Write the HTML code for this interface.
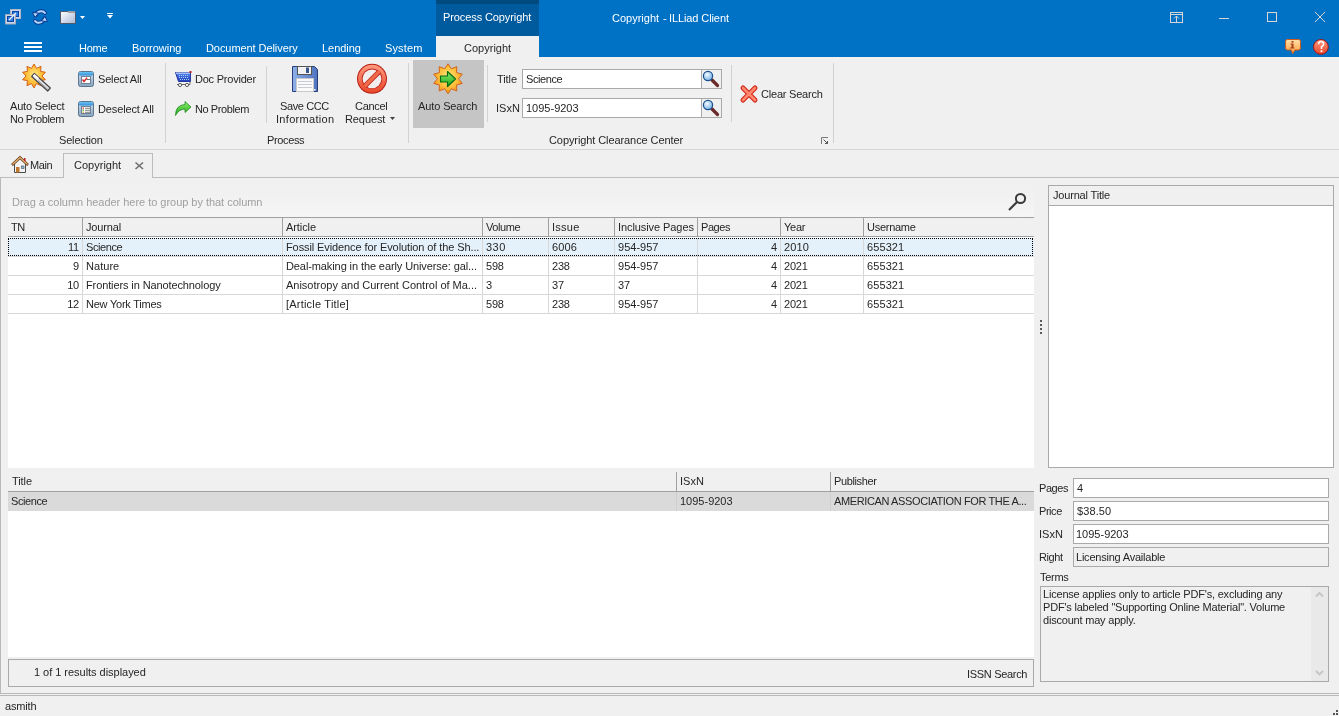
<!DOCTYPE html>
<html><head><meta charset="utf-8">
<style>
*{margin:0;padding:0;box-sizing:border-box;}
html,body{width:1339px;height:716px;overflow:hidden;background:#f0f0f0;}
body{position:relative;will-change:transform;font-family:"Liberation Sans",sans-serif;font-size:11px;color:#262626;letter-spacing:-0.2px;}
.a{position:absolute;}
.t{position:absolute;white-space:nowrap;line-height:13px;}
.w{color:#fff;}
.vs{position:absolute;width:1px;background:#d2d2d2;}
.box{position:absolute;border:1px solid #a9a9a9;background:#fff;}
.gh{position:absolute;top:217px;height:20px;background:#f0f0f0;border-top:1px solid #a0a0a0;border-bottom:1px solid #a0a0a0;}
.hc{position:absolute;top:0;height:19px;line-height:19px;padding-left:3px;white-space:nowrap;overflow:hidden;}
.hd{position:absolute;top:0;width:1px;height:19px;background:#a0a0a0;}
.row{position:absolute;left:8px;width:1025px;height:19px;border-bottom:1px solid #d8d8d8;background:#fff;}
.c{position:absolute;top:0;height:18px;line-height:18px;white-space:nowrap;overflow:hidden;padding-left:3px;}
.r{text-align:right;padding-left:0;padding-right:4px;}
.cd{position:absolute;top:0;width:1px;height:18px;background:#d8d8d8;}
</style></head><body>

<!-- ===== Title bar ===== -->
<div class="a" style="left:0;top:0;width:1339px;height:57px;background:#0072c6;"></div>
<!-- contextual tab -->
<div class="a" style="left:436px;top:0;width:103px;height:36px;background:#005a9e;"></div>
<div class="a" style="left:436px;top:0;width:103px;height:4px;background:#004a80;"></div>
<div class="a" style="left:436px;top:36px;width:103px;height:21px;background:#f0f0f0;"></div>
<div class="t w" style="left:443px;top:11px;letter-spacing:-0.10px;">Process Copyright</div>
<div class="t w" style="left:612px;top:12px;letter-spacing:0px;">Copyright</div>
<div class="t w" style="left:663px;top:12px;">-</div>
<div class="t w" style="left:669px;top:12px;letter-spacing:-0.1px;">ILLiad Client</div>
<div class="t" style="left:464px;top:42px;letter-spacing:0.01px;">Copyright</div>

<!-- ribbon tabs -->
<div class="a" style="left:24px;top:42px;width:18px;height:2px;background:#fff;"></div>
<div class="a" style="left:24px;top:46px;width:18px;height:2px;background:#fff;"></div>
<div class="a" style="left:24px;top:50px;width:18px;height:2px;background:#fff;"></div>
<div class="t w" style="left:79px;top:42px;letter-spacing:-0.23px;">Home</div>
<div class="t w" style="left:132px;top:42px;letter-spacing:-0.02px;">Borrowing</div>
<div class="t w" style="left:206px;top:42px;letter-spacing:-0.07px;">Document Delivery</div>
<div class="t w" style="left:322px;top:42px;letter-spacing:-0.05px;">Lending</div>
<div class="t w" style="left:385px;top:42px;letter-spacing:0.14px;">System</div>

<!-- ===== Ribbon body ===== -->
<div class="a" style="left:0;top:149px;width:1339px;height:1px;background:#d5d5d5;"></div>
<div class="vs" style="left:165px;top:63px;height:80px;"></div>
<div class="vs" style="left:266px;top:66px;height:57px;"></div>
<div class="vs" style="left:408px;top:63px;height:80px;"></div>
<div class="vs" style="left:487px;top:65px;height:57px;"></div>
<div class="vs" style="left:731px;top:65px;height:57px;"></div>
<div class="vs" style="left:833px;top:63px;height:80px;"></div>

<div class="t" style="left:10px;top:100px;letter-spacing:-0.17px;">Auto Select</div>
<div class="t" style="left:10px;top:113px;letter-spacing:-0.42px;">No Problem</div>
<div class="t" style="left:98px;top:73px;letter-spacing:-0.17px;">Select All</div>
<div class="t" style="left:98px;top:103px;letter-spacing:-0.13px;">Deselect All</div>
<div class="t" style="left:59px;top:134px;letter-spacing:-0.17px;">Selection</div>

<div class="t" style="left:195px;top:73px;letter-spacing:-0.22px;">Doc Provider</div>
<div class="t" style="left:195px;top:103px;letter-spacing:-0.42px;">No Problem</div>
<div class="t" style="left:280px;top:100px;letter-spacing:-0.39px;">Save CCC</div>
<div class="t" style="left:276px;top:113px;letter-spacing:0.31px;">Information</div>
<div class="t" style="left:355px;top:100px;letter-spacing:-0.30px;">Cancel</div>
<div class="t" style="left:345px;top:113px;letter-spacing:-0.10px;">Request</div>
<div class="t" style="left:267px;top:134px;letter-spacing:-0.37px;">Process</div>

<div class="a" style="left:413px;top:60px;width:71px;height:68px;background:#c5c5c5;"></div>
<div class="t" style="left:418px;top:100px;letter-spacing:-0.11px;">Auto Search</div>
<div class="t" style="left:497px;top:73px;letter-spacing:-0.09px;">Title</div>
<div class="t" style="left:496px;top:102px;letter-spacing:0.05px;">ISxN</div>
<div class="box" style="left:522px;top:69px;width:180px;height:20px;"></div>
<div class="t" style="left:526px;top:73px;letter-spacing:-0.41px;">Science</div>
<div class="box" style="left:701px;top:69px;width:21px;height:20px;background:#f0f0f0;"></div>
<div class="box" style="left:522px;top:98px;width:180px;height:20px;"></div>
<div class="t" style="left:526px;top:102px;letter-spacing:0.00px;">1095-9203</div>
<div class="box" style="left:701px;top:98px;width:21px;height:20px;background:#f0f0f0;"></div>
<div class="t" style="left:761px;top:88px;letter-spacing:-0.21px;">Clear Search</div>
<div class="t" style="left:549px;top:134px;letter-spacing:-0.09px;">Copyright Clearance Center</div>

<!-- ===== Document tabs ===== -->
<div class="a" style="left:0;top:177px;width:1339px;height:1px;background:#bcbcbc;"></div>
<div class="a" style="left:63px;top:153px;width:90px;height:25px;border:1px solid #bcbcbc;border-bottom:none;background:#f0f0f0;"></div>
<div class="t" style="left:30px;top:159px;letter-spacing:-0.37px;">Main</div>
<div class="t" style="left:74px;top:159px;letter-spacing:0.01px;">Copyright</div>

<!-- ===== Content ===== -->
<div class="a" style="left:0;top:177px;width:1px;height:517px;background:#b9b9b9;"></div>
<div class="a" style="left:0;top:693px;width:1339px;height:1px;background:#b9b9b9;"></div>
<div class="a" style="left:0;top:695px;width:1339px;height:1px;background:#b9b9b9;"></div>

<!-- group panel -->
<div class="a" style="left:8px;top:188px;width:1026px;height:29px;background:linear-gradient(#f0f0f0,#f5f5f5);"></div>
<div class="t" style="left:12px;top:196px;color:#a0a0a0;letter-spacing:-0.03px;">Drag a column header here to group by that column</div>

<!-- top grid -->
<div class="a" style="left:8px;top:237px;width:1026px;height:231px;background:#fff;"></div>
<div class="gh" style="left:8px;width:1026px;">
  <div class="hc" style="left:0;width:74px;letter-spacing:-0.40px;">TN</div>
  <div class="hd" style="left:74px;"></div>
  <div class="hc" style="left:75px;width:199px;letter-spacing:-0.14px;">Journal</div>
  <div class="hd" style="left:274px;"></div>
  <div class="hc" style="left:275px;width:199px;letter-spacing:-0.08px;">Article</div>
  <div class="hd" style="left:474px;"></div>
  <div class="hc" style="left:475px;width:65px;letter-spacing:-0.40px;">Volume</div>
  <div class="hd" style="left:540px;"></div>
  <div class="hc" style="left:541px;width:65px;letter-spacing:0.25px;">Issue</div>
  <div class="hd" style="left:606px;"></div>
  <div class="hc" style="left:607px;width:82px;letter-spacing:-0.08px;">Inclusive Pages</div>
  <div class="hd" style="left:689px;"></div>
  <div class="hc" style="left:690px;width:82px;letter-spacing:-0.44px;">Pages</div>
  <div class="hd" style="left:772px;"></div>
  <div class="hc" style="left:773px;width:82px;letter-spacing:-0.23px;">Year</div>
  <div class="hd" style="left:855px;"></div>
  <div class="hc" style="left:856px;width:169px;letter-spacing:-0.27px;">Username</div>
</div>

<!-- rows -->
<div class="a" style="left:8px;top:238px;width:1026px;height:18px;background:#e5f1fa;"></div>
<div class="a" style="left:8px;top:256px;width:1026px;height:1px;background:#d8d8d8;"></div>
<div class="a" style="left:82px;top:238px;width:1px;height:18px;background:#d8d8d8;"></div>
<div class="a" style="left:282px;top:238px;width:1px;height:18px;background:#d8d8d8;"></div>
<div class="a" style="left:482px;top:238px;width:1px;height:18px;background:#d8d8d8;"></div>
<div class="a" style="left:548px;top:238px;width:1px;height:18px;background:#d8d8d8;"></div>
<div class="a" style="left:614px;top:238px;width:1px;height:18px;background:#d8d8d8;"></div>
<div class="a" style="left:697px;top:238px;width:1px;height:18px;background:#d8d8d8;"></div>
<div class="a" style="left:780px;top:238px;width:1px;height:18px;background:#d8d8d8;"></div>
<div class="a" style="left:863px;top:238px;width:1px;height:18px;background:#d8d8d8;"></div>
<div class="t" style="left:8px;width:71px;text-align:right;top:241px;">11</div>
<div class="t" style="left:86px;top:241px;letter-spacing:-0.41px;">Science</div>
<div class="t" style="left:286px;top:241px;letter-spacing:-0.10px;">Fossil Evidence for Evolution of the Sh...</div>
<div class="t" style="left:486px;top:241px;letter-spacing:0.50px;">330</div>
<div class="t" style="left:552px;top:241px;letter-spacing:0.17px;">6006</div>
<div class="t" style="left:618px;top:241px;letter-spacing:0.02px;">954-957</div>
<div class="t" style="left:697px;width:80px;text-align:right;top:241px;">4</div>
<div class="t" style="left:784px;top:241px;letter-spacing:0.17px;">2010</div>
<div class="t" style="left:867px;top:241px;letter-spacing:0.10px;">655321</div>
<div class="a" style="left:8px;top:257px;width:1026px;height:18px;background:#fff;"></div>
<div class="a" style="left:8px;top:275px;width:1026px;height:1px;background:#d8d8d8;"></div>
<div class="a" style="left:82px;top:257px;width:1px;height:18px;background:#d8d8d8;"></div>
<div class="a" style="left:282px;top:257px;width:1px;height:18px;background:#d8d8d8;"></div>
<div class="a" style="left:482px;top:257px;width:1px;height:18px;background:#d8d8d8;"></div>
<div class="a" style="left:548px;top:257px;width:1px;height:18px;background:#d8d8d8;"></div>
<div class="a" style="left:614px;top:257px;width:1px;height:18px;background:#d8d8d8;"></div>
<div class="a" style="left:697px;top:257px;width:1px;height:18px;background:#d8d8d8;"></div>
<div class="a" style="left:780px;top:257px;width:1px;height:18px;background:#d8d8d8;"></div>
<div class="a" style="left:863px;top:257px;width:1px;height:18px;background:#d8d8d8;"></div>
<div class="t" style="left:8px;width:71px;text-align:right;top:260px;">9</div>
<div class="t" style="left:86px;top:260px;letter-spacing:0.04px;">Nature</div>
<div class="t" style="left:286px;top:260px;letter-spacing:-0.10px;">Deal-making in the early Universe: gal...</div>
<div class="t" style="left:486px;top:260px;">598</div>
<div class="t" style="left:552px;top:260px;">238</div>
<div class="t" style="left:618px;top:260px;letter-spacing:0.02px;">954-957</div>
<div class="t" style="left:697px;width:80px;text-align:right;top:260px;">4</div>
<div class="t" style="left:784px;top:260px;">2021</div>
<div class="t" style="left:867px;top:260px;letter-spacing:0.10px;">655321</div>
<div class="a" style="left:8px;top:276px;width:1026px;height:18px;background:#fff;"></div>
<div class="a" style="left:8px;top:294px;width:1026px;height:1px;background:#d8d8d8;"></div>
<div class="a" style="left:82px;top:276px;width:1px;height:18px;background:#d8d8d8;"></div>
<div class="a" style="left:282px;top:276px;width:1px;height:18px;background:#d8d8d8;"></div>
<div class="a" style="left:482px;top:276px;width:1px;height:18px;background:#d8d8d8;"></div>
<div class="a" style="left:548px;top:276px;width:1px;height:18px;background:#d8d8d8;"></div>
<div class="a" style="left:614px;top:276px;width:1px;height:18px;background:#d8d8d8;"></div>
<div class="a" style="left:697px;top:276px;width:1px;height:18px;background:#d8d8d8;"></div>
<div class="a" style="left:780px;top:276px;width:1px;height:18px;background:#d8d8d8;"></div>
<div class="a" style="left:863px;top:276px;width:1px;height:18px;background:#d8d8d8;"></div>
<div class="t" style="left:8px;width:71px;text-align:right;top:279px;">10</div>
<div class="t" style="left:86px;top:279px;letter-spacing:-0.11px;">Frontiers in Nanotechnology</div>
<div class="t" style="left:286px;top:279px;letter-spacing:-0.01px;">Anisotropy and Current Control of Ma...</div>
<div class="t" style="left:486px;top:279px;">3</div>
<div class="t" style="left:552px;top:279px;">37</div>
<div class="t" style="left:618px;top:279px;">37</div>
<div class="t" style="left:697px;width:80px;text-align:right;top:279px;">4</div>
<div class="t" style="left:784px;top:279px;">2021</div>
<div class="t" style="left:867px;top:279px;letter-spacing:0.10px;">655321</div>
<div class="a" style="left:8px;top:295px;width:1026px;height:18px;background:#fff;"></div>
<div class="a" style="left:8px;top:313px;width:1026px;height:1px;background:#d8d8d8;"></div>
<div class="a" style="left:82px;top:295px;width:1px;height:18px;background:#d8d8d8;"></div>
<div class="a" style="left:282px;top:295px;width:1px;height:18px;background:#d8d8d8;"></div>
<div class="a" style="left:482px;top:295px;width:1px;height:18px;background:#d8d8d8;"></div>
<div class="a" style="left:548px;top:295px;width:1px;height:18px;background:#d8d8d8;"></div>
<div class="a" style="left:614px;top:295px;width:1px;height:18px;background:#d8d8d8;"></div>
<div class="a" style="left:697px;top:295px;width:1px;height:18px;background:#d8d8d8;"></div>
<div class="a" style="left:780px;top:295px;width:1px;height:18px;background:#d8d8d8;"></div>
<div class="a" style="left:863px;top:295px;width:1px;height:18px;background:#d8d8d8;"></div>
<div class="t" style="left:8px;width:71px;text-align:right;top:298px;">12</div>
<div class="t" style="left:86px;top:298px;letter-spacing:-0.23px;">New York Times</div>
<div class="t" style="left:286px;top:298px;letter-spacing:0.21px;">[Article Title]</div>
<div class="t" style="left:486px;top:298px;">598</div>
<div class="t" style="left:552px;top:298px;">238</div>
<div class="t" style="left:618px;top:298px;letter-spacing:0.02px;">954-957</div>
<div class="t" style="left:697px;width:80px;text-align:right;top:298px;">4</div>
<div class="t" style="left:784px;top:298px;">2021</div>
<div class="t" style="left:867px;top:298px;letter-spacing:0.10px;">655321</div>
<div class="a" style="left:8px;top:238px;width:1025px;height:18px;border:1px dotted #000;"></div>

<!-- bottom grid -->
<div class="a" style="left:8px;top:468px;width:1026px;height:24px;background:#f0f0f0;border-bottom:1px solid #a0a0a0;"></div>
<div class="t" style="left:12px;top:475px;letter-spacing:-0.09px;">Title</div>
<div class="t" style="left:680px;top:475px;letter-spacing:0.05px;">ISxN</div>
<div class="t" style="left:834px;top:475px;letter-spacing:-0.38px;">Publisher</div>
<div class="a" style="left:676px;top:472px;width:1px;height:19px;background:#a0a0a0;"></div>
<div class="a" style="left:830px;top:472px;width:1px;height:19px;background:#a0a0a0;"></div>
<div class="a" style="left:8px;top:492px;width:1026px;height:19px;background:#dadada;"></div>
<div class="a" style="left:676px;top:492px;width:1px;height:19px;background:#cfcfcf;"></div>
<div class="a" style="left:830px;top:492px;width:1px;height:19px;background:#cfcfcf;"></div>
<div class="t" style="left:11px;top:495px;letter-spacing:-0.41px;">Science</div>
<div class="t" style="left:680px;top:495px;letter-spacing:0.00px;">1095-9203</div>
<div class="t" style="left:834px;top:495px;letter-spacing:-0.38px;">AMERICAN ASSOCIATION FOR THE A...</div>
<div class="a" style="left:8px;top:511px;width:1026px;height:146px;background:#fff;"></div>
<div class="a" style="left:8px;top:659px;width:1026px;height:28px;border:1px solid #a9a9a9;background:#f0f0f0;"></div>
<div class="t" style="left:34px;top:666px;letter-spacing:-0.03px;">1 of 1 results displayed</div>
<div class="t" style="left:967px;top:668px;letter-spacing:-0.31px;">ISSN Search</div>

<!-- right panel -->
<div class="box" style="left:1048px;top:185px;width:286px;height:283px;"></div>
<div class="a" style="left:1049px;top:186px;width:284px;height:20px;background:#f0f0f0;border-bottom:1px solid #a9a9a9;"></div>
<div class="t" style="left:1053px;top:189px;letter-spacing:-0.18px;">Journal Title</div>

<div class="t" style="left:1039px;top:482px;letter-spacing:-0.44px;">Pages</div>
<div class="box" style="left:1073px;top:478px;width:256px;height:20px;"></div>
<div class="t" style="left:1077px;top:482px;">4</div>
<div class="t" style="left:1039px;top:505px;letter-spacing:-0.45px;">Price</div>
<div class="box" style="left:1073px;top:501px;width:256px;height:20px;"></div>
<div class="t" style="left:1077px;top:505px;letter-spacing:0.10px;">$38.50</div>
<div class="t" style="left:1039px;top:528px;letter-spacing:0.05px;">ISxN</div>
<div class="box" style="left:1073px;top:524px;width:256px;height:20px;"></div>
<div class="t" style="left:1076px;top:528px;letter-spacing:0.00px;">1095-9203</div>
<div class="t" style="left:1039px;top:551px;letter-spacing:-0.40px;">Right</div>
<div class="box" style="left:1073px;top:547px;width:256px;height:20px;background:#f0f0f0;"></div>
<div class="t" style="left:1076px;top:551px;letter-spacing:-0.22px;">Licensing Available</div>
<div class="t" style="left:1040px;top:571px;letter-spacing:-0.30px;">Terms</div>
<div class="box" style="left:1040px;top:586px;width:289px;height:96px;background:#f0f0f0;"></div>
<div class="a" style="left:1311px;top:587px;width:17px;height:94px;background:#e9e9e9;"></div>
<div class="t" style="left:1043px;top:588px;white-space:normal;width:265px;line-height:13px;">License applies only to article PDF's, excluding any PDF's labeled "Supporting Online Material". Volume discount may apply.</div>

<!-- status bar -->
<div class="t" style="left:5px;top:700px;letter-spacing:-0.16px;">asmith</div>

<svg class="a" style="left:0;top:0;" width="1339" height="716" viewBox="0 0 1339 716">
<defs>
 <radialGradient id="gStar" cx="0.5" cy="0.45" r="0.55"><stop offset="0" stop-color="#ffec8a"/><stop offset="0.6" stop-color="#ffbf3a"/><stop offset="1" stop-color="#f0901c"/></radialGradient>
 <linearGradient id="gBlueTitle" x1="0" y1="0" x2="0" y2="1"><stop offset="0" stop-color="#6cc4f4"/><stop offset="1" stop-color="#2f8fd8"/></linearGradient>
 <linearGradient id="gFrame" x1="0" y1="0" x2="0" y2="1"><stop offset="0" stop-color="#d8e0f0"/><stop offset="1" stop-color="#8aa4bc"/></linearGradient>
 <linearGradient id="gCart" x1="0" y1="0" x2="0" y2="1"><stop offset="0" stop-color="#5a86f0"/><stop offset="1" stop-color="#1f3fb8"/></linearGradient>
 <linearGradient id="gGreen" x1="0" y1="0" x2="0" y2="1"><stop offset="0" stop-color="#8ef06a"/><stop offset="1" stop-color="#1aa51a"/></linearGradient>
 <linearGradient id="gRed" x1="0" y1="0" x2="0" y2="1"><stop offset="0" stop-color="#ff9a80"/><stop offset="1" stop-color="#e8472a"/></linearGradient>
 <linearGradient id="gOrange" x1="0" y1="0" x2="0" y2="1"><stop offset="0" stop-color="#ffe0a8"/><stop offset="1" stop-color="#ff9d3a"/></linearGradient>
 <linearGradient id="gFloppy" x1="0" y1="0" x2="1" y2="0"><stop offset="0" stop-color="#8fb0e8"/><stop offset="1" stop-color="#4f74c0"/></linearGradient>
 <radialGradient id="gLens" cx="0.4" cy="0.35" r="0.7"><stop offset="0" stop-color="#f4fbff"/><stop offset="1" stop-color="#6fb0e8"/></radialGradient>
 <linearGradient id="gFolder" x1="0" y1="0" x2="1" y2="1"><stop offset="0" stop-color="#ffffff"/><stop offset="1" stop-color="#a8b8d8"/></linearGradient>
</defs>

<!-- QAT icon 1: overlapping windows -->
<rect x="10.5" y="9.5" width="10" height="9" fill="#c8d8f0" stroke="#b0b8c8"/>
<rect x="12.5" y="11.5" width="6" height="5" fill="#2f7fe0" stroke="#1040a0"/>
<rect x="5.5" y="14.5" width="10" height="9.5" fill="#c8d8f0" stroke="#a0a8b8"/>
<rect x="7.5" y="16.5" width="6" height="5" fill="#2f7fe0" stroke="#1040a0"/>
<path d="M9 20 L16 13" stroke="#e8f4ff" stroke-width="1.3"/>
<!-- QAT icon 2: refresh -->
<path d="M35.5 15.5 Q37.5 10.5 43 11.5 L45 13" stroke="#0b3a94" stroke-width="4" fill="none" stroke-linecap="round"/>
<path d="M35.5 15.5 Q37.5 10.5 43 11.5 L45 13" stroke="#b4d8fa" stroke-width="2" fill="none" stroke-linecap="round"/>
<path d="M32.5 12.5 L38.5 13 L35 17.5 Z" fill="#b4d8fa" stroke="#0b3a94" stroke-width="1" stroke-linejoin="round"/>
<path d="M44.5 18.5 Q42.5 23.5 37 22.5 L35 21" stroke="#0b3a94" stroke-width="4" fill="none" stroke-linecap="round"/>
<path d="M44.5 18.5 Q42.5 23.5 37 22.5 L35 21" stroke="#b4d8fa" stroke-width="2" fill="none" stroke-linecap="round"/>
<path d="M47.5 21.5 L41.5 21 L45 16.5 Z" fill="#b4d8fa" stroke="#0b3a94" stroke-width="1" stroke-linejoin="round"/>
<!-- QAT icon 3: folder -->
<path d="M60.5 11.5 H67.5 L68.5 12.5 H75.5 V23.5 H60.5 Z" fill="url(#gFolder)" stroke="#505868"/>
<rect x="68" y="11" width="7" height="2" fill="#a0a0a0"/>
<path d="M80 16 H85 L82.5 19 Z" fill="#fff"/>
<!-- customize -->
<rect x="107" y="13" width="6" height="1" fill="#fff"/>
<path d="M107 15 H113 L110 18.5 Z" fill="#fff"/>

<!-- window controls -->
<g stroke="#d6d6d6" fill="none" stroke-width="1">
 <rect x="1170.5" y="12.5" width="12" height="10"/>
 <line x1="1170.5" y1="14.5" x2="1182.5" y2="14.5"/>
 <line x1="1176.5" y1="16" x2="1176.5" y2="22"/>
 <path d="M1174 18.5 L1176.5 16 L1179 18.5"/>
 <line x1="1219" y1="18.5" x2="1229" y2="18.5"/>
 <rect x="1267.5" y="12.5" width="9" height="9"/>
 <path d="M1315 12 L1325 22 M1325 12 L1315 22"/>
</g>

<!-- info bubble -->
<path d="M1287.5 39.5 H1298.5 Q1300.5 39.5 1300.5 41.5 V48 Q1300.5 50 1298.5 50 H1295 L1292.5 54 L1291.5 50 H1287.5 Q1285.5 50 1285.5 48 V41.5 Q1285.5 39.5 1287.5 39.5 Z" fill="url(#gOrange)" stroke="#d0581a"/>
<rect x="1291.5" y="41" width="2" height="1.6" fill="#a8401c"/>
<path d="M1290.5 43.5 H1293.5 V47.5 H1294.5 V48.5 H1290 V47.5 H1291.5 V44.5 H1290.5 Z" fill="#a8401c"/>
<!-- help circle -->
<circle cx="1320.9" cy="46.9" r="7.4" fill="url(#gRed)" stroke="#a01010"/>
<path d="M1318.6 44.3 Q1318.8 41.6 1321.2 41.6 Q1323.6 41.6 1323.6 43.9 Q1323.6 45.6 1321.5 46.7 V49" stroke="#fff" stroke-width="1.5" fill="none"/>
<rect x="1320.6" y="50.3" width="1.8" height="1.8" fill="#fff"/>

<!-- Auto select wand -->

<polygon points="34.00,64.00 36.47,68.39 41.05,66.29 40.47,71.30 45.41,72.29 42.00,76.00 45.41,79.71 40.47,80.70 41.05,85.71 36.47,83.61 34.00,88.00 31.53,83.61 26.95,85.71 27.53,80.70 22.59,79.71 26.00,76.00 22.59,72.29 27.53,71.30 26.95,66.29 31.53,68.39" fill="url(#gStar)" stroke="#d4661a" stroke-width="1"/>
<path d="M31.7 76.5 L34.3 73.5 L50.3 88 L47.7 91 Z" fill="#e4e4e4" stroke="#46464c" stroke-width="1.2" stroke-linejoin="round"/>
<path d="M33 75.6 L34.5 74 L39 78 L37.5 79.6 Z" fill="#ffffff"/>
<path d="M38 80.5 L48 89.5" stroke="#9a9aa0" stroke-width="1"/>

<!-- Select All icon -->
<g>
 <rect x="78.5" y="71.5" width="15" height="15" rx="2" fill="url(#gFrame)" stroke="#5a7690"/>
 <rect x="79" y="72" width="14" height="3.5" rx="1.2" fill="url(#gBlueTitle)"/>
 <rect x="81.5" y="76.5" width="9" height="7" fill="#fff" stroke="#6c8298"/>
 <path d="M82.5 79.5 L84 81.5 L87 77.8" stroke="#d42a2a" stroke-width="1.4" fill="none"/>
 <rect x="86.5" y="79" width="3.5" height="1" fill="#707070"/>
</g>
<!-- Deselect All icon -->
<g>
 <rect x="78.5" y="101.5" width="15" height="15" rx="2" fill="url(#gFrame)" stroke="#5a7690"/>
 <rect x="79" y="102" width="14" height="3.5" rx="1.2" fill="url(#gBlueTitle)"/>
 <rect x="81.5" y="106.5" width="9" height="7" fill="#fff" stroke="#6c8298"/>
 <rect x="82.5" y="107.5" width="1.5" height="1.3" fill="#e04040"/>
 <rect x="82.5" y="109.5" width="1.5" height="1.3" fill="#40b040"/>
 <rect x="82.5" y="111.5" width="1.5" height="1.3" fill="#f0a020"/>
 <rect x="85" y="107.8" width="5" height="0.9" fill="#707070"/>
 <rect x="85" y="109.8" width="5" height="0.9" fill="#707070"/>
 <rect x="85" y="111.8" width="5" height="0.9" fill="#707070"/>
</g>

<!-- cart -->
<path d="M175.5 72.5 H190.5 V81.5 H178.5 Z" fill="url(#gCart)" stroke="#2438a0"/>
<rect x="176" y="72.5" width="14" height="1.2" fill="#c8dcff"/>
<g fill="#9fd0ff">
 <rect x="179" y="75" width="1" height="1"/><rect x="181" y="75" width="1" height="1"/><rect x="183" y="75" width="1" height="1"/><rect x="185" y="75" width="1" height="1"/><rect x="187" y="75" width="1" height="1"/>
 <rect x="179" y="77" width="1" height="1"/><rect x="181" y="77" width="1" height="1"/><rect x="183" y="77" width="1" height="1"/><rect x="185" y="77" width="1" height="1"/><rect x="187" y="77" width="1" height="1"/>
 <rect x="180" y="79" width="1" height="1"/><rect x="182" y="79" width="1" height="1"/><rect x="184" y="79" width="1" height="1"/><rect x="186" y="79" width="1" height="1"/><rect x="188" y="79" width="1" height="1"/>
</g>
<rect x="189.5" y="71" width="2" height="2" fill="#c02020"/>
<path d="M190 82 V84.5 H177" stroke="#6a6a6a" fill="none"/>
<circle cx="180" cy="85" r="1.6" fill="#fff" stroke="#5a5a5a"/>
<circle cx="187" cy="85" r="1.6" fill="#fff" stroke="#5a5a5a"/>
<!-- green arrow -->
<path d="M175.5 115.5 Q175.5 105 185 104.5 V101.5 L191 107 L185 112.5 V109 Q179 109 175.5 115.5 Z" fill="url(#gGreen)" stroke="#1f8a1f" stroke-width="0.8"/>

<!-- floppy -->
<path d="M292.5 66.5 H314.5 L317.5 69.5 V91.5 H292.5 Z" fill="url(#gFloppy)" stroke="#283e78" rx="1"/>
<rect x="297.5" y="66.5" width="14" height="8" fill="#f2f2f2" stroke="#555"/>
<rect x="306" y="67.5" width="3" height="5.5" fill="#3a5690"/>
<rect x="296.5" y="78.5" width="17" height="13" fill="#fafafa" stroke="#c8c8c8"/>
<rect x="298" y="81" width="14" height="1" fill="#c8ccd4"/>
<rect x="298" y="84" width="14" height="1" fill="#c8ccd4"/>
<rect x="298" y="87" width="14" height="1" fill="#c8ccd4"/>
<rect x="314" y="89" width="1.5" height="1.5" fill="#fff"/>

<!-- cancel -->
<circle cx="372" cy="78.8" r="15" fill="#b81e10"/>
<circle cx="372" cy="78.8" r="14" fill="url(#gRed)"/>
<circle cx="372" cy="78.8" r="10.3" fill="#c02818"/>
<circle cx="372" cy="78.8" r="9.4" fill="#f3eeee"/>
<line x1="364.6" y1="86.2" x2="379.4" y2="71.4" stroke="#c02818" stroke-width="5"/>
<line x1="364.6" y1="86.2" x2="379.4" y2="71.4" stroke="#f06a4c" stroke-width="3.4"/>
<path d="M390 117 H395 L392.5 120 Z" fill="#404040"/>

<!-- auto search star -->
<polygon points="448.00,63.80 451.24,68.81 456.82,66.66 456.49,72.63 462.27,74.16 458.50,78.80 462.27,83.44 456.49,84.97 456.82,90.94 451.24,88.79 448.00,93.80 444.76,88.79 439.18,90.94 439.51,84.97 433.73,83.44 437.50,78.80 433.73,74.16 439.51,72.63 439.18,66.66 444.76,68.81" fill="url(#gStar)" stroke="#d4661a" stroke-width="1"/>
<path d="M440.5 76 H447.5 V71.5 L455.5 79 L447.5 86.5 V82 H440.5 Z" fill="url(#gGreen)" stroke="#0a6a10" stroke-width="1.2" stroke-linejoin="round"/>

<!-- search magnifiers -->
<g>
 <line x1="712" y1="80" x2="717.5" y2="85.5" stroke="#6a2a2a" stroke-width="3.2" stroke-linecap="round"/>
 <circle cx="708" cy="76" r="4.6" fill="url(#gLens)" stroke="#1c508c" stroke-width="1.2"/>
</g>
<g>
 <line x1="712" y1="109" x2="717.5" y2="114.5" stroke="#6a2a2a" stroke-width="3.2" stroke-linecap="round"/>
 <circle cx="708" cy="105" r="4.6" fill="url(#gLens)" stroke="#1c508c" stroke-width="1.2"/>
</g>

<!-- clear search X -->
<path d="M743 88 L755 100 M755 88 L743 100" stroke="#d42a1a" stroke-width="5" stroke-linecap="round"/>
<path d="M743 88 L755 100 M755 88 L743 100" stroke="#ff8a70" stroke-width="2.6" stroke-linecap="round"/>

<!-- dialog launcher -->
<path d="M821.5 144 V137.5 H828" stroke="#777" fill="none"/>
<path d="M823.5 139.5 L827.5 143.5 M827.5 141 V143.5 H825" stroke="#555" fill="none"/>

<!-- house -->
<path d="M14.5 163.5 V172.5 H25.5 V163.5" fill="#f4f4f4" stroke="#4a4a4a"/>
<path d="M12 165 L20 157.5 L28 165" stroke="#5a3210" stroke-width="2.6" fill="none"/>
<path d="M12.5 164.5 L20 157.5 L27.5 164.5" stroke="#f0b878" stroke-width="1.2" fill="none"/>
<rect x="16" y="167" width="3.5" height="5.5" fill="#c07a30"/>
<rect x="21.5" y="166" width="2.5" height="2.5" fill="#8ac8f8" stroke="#444" stroke-width="0.6"/>
<rect x="24" y="158" width="1.5" height="3" fill="#c02020"/>
<!-- tab close -->
<path d="M135.5 162.5 L143 169 M143 162.5 L135.5 169" stroke="#6e6e6e" stroke-width="1.6"/>

<!-- grid find -->
<circle cx="1020.5" cy="198.5" r="4.6" fill="none" stroke="#3a3a3a" stroke-width="2"/>
<line x1="1017" y1="202" x2="1009" y2="210" stroke="#3a3a3a" stroke-width="2.2"/>

<!-- splitter dots -->
<g fill="#5a5a5a"><rect x="1040" y="320" width="2" height="2"/><rect x="1040" y="324" width="2" height="2"/><rect x="1040" y="328" width="2" height="2"/><rect x="1040" y="332" width="2" height="2"/></g>

<!-- terms scroll arrows -->
<path d="M1316 596.5 L1319.5 593 L1323 596.5" stroke="#c4c4c4" stroke-width="1.8" fill="none"/>
<path d="M1316 671 L1319.5 674.5 L1323 671" stroke="#c4c4c4" stroke-width="1.8" fill="none"/>

<!-- resize grip -->
<g fill="#555"><rect x="1336" y="710" width="2" height="2"/><rect x="1333" y="713" width="2" height="2"/><rect x="1336" y="713" width="2" height="2"/></g>
</svg>

</body></html>
